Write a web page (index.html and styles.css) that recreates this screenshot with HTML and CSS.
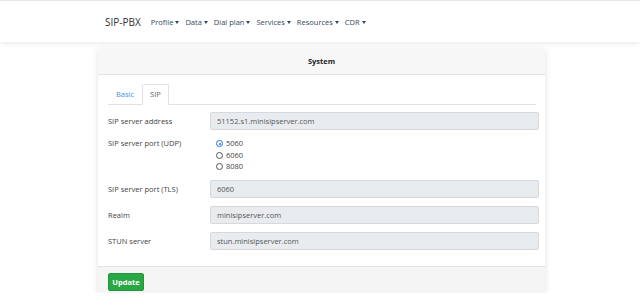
FILE: index.html
```html
<!DOCTYPE html>
<html lang="en">

<head>
    <meta charset="UTF-8">
    <meta name="viewport" content="width=device-width, initial-scale=1.0">
    <title>SIP-PBX - System</title>
    <link rel="stylesheet" href="styles.css">
</head>

<body>
    <nav class="navbar">
        <span class="brand">SIP-PBX</span>
        <ul class="menu">
            <li class="dropdown">Profile</li>
            <li class="dropdown">Data</li>
            <li class="dropdown">Dial plan</li>
            <li class="dropdown">Services</li>
            <li class="dropdown">Resources</li>
            <li class="dropdown">CDR</li>
        </ul>
    </nav>

    <div class="card">
        <div class="card-header">System</div>
        <div class="card-body">
            <ul class="tabs">
                <li class="tab">Basic</li>
                <li class="tab active">SIP</li>
            </ul>

            <div class="form-row">
                <label>SIP server address</label>
                <input type="text" value="51152.s1.minisipserver.com" readonly>
            </div>

            <div class="form-row radio-row">
                <label>SIP server port (UDP)</label>
                <div class="radios">
                    <label class="radio"><span class="dot checked"></span>5060</label>
                    <label class="radio"><span class="dot"></span>6060</label>
                    <label class="radio"><span class="dot"></span>8080</label>
                </div>
            </div>

            <div class="form-row">
                <label>SIP server port (TLS)</label>
                <input type="text" value="6060" readonly>
            </div>

            <div class="form-row">
                <label>Realm</label>
                <input type="text" value="minisipserver.com" readonly>
            </div>

            <div class="form-row">
                <label>STUN server</label>
                <input type="text" value="stun.minisipserver.com" readonly>
            </div>
        </div>
        <div class="card-footer">
            <button class="btn">Update</button>
        </div>
    </div>
</body>

</html>
```

FILE: styles.css
```css
body {
    font-family: "Open Sans", Arial, sans-serif;
    font-size: 7.5px;
    color: #333;
    margin: 0;
    background-color: #fff;
    border-top: 1px solid #e6e6e6;
}

.navbar {
    display: flex;
    align-items: center;
    height: 41px;
    padding-left: 105px;
    background: #fff;
    box-shadow: 0 2px 5px rgba(0, 0, 0, 0.08);
}

.brand {
    font-size: 10px;
    color: #333;
    margin-right: 10px;
}

.menu {
    display: flex;
    list-style: none;
    margin: 0;
    padding: 0;
    gap: 6px;
}

.dropdown {
    color: #34495e;
    font-size: 7.5px;
}

.dropdown::after {
    content: "";
    display: inline-block;
    margin-left: 2px;
    vertical-align: 1px;
    border-top: 3px solid #34495e;
    border-left: 2px solid transparent;
    border-right: 2px solid transparent;
}

.card {
    width: 447px;
    margin: 7px 0 0 98px;
    background: #fff;
    box-shadow: 0 1px 6px rgba(0, 0, 0, 0.12);
}

.card-header {
    background: #f7f7f7;
    border-bottom: 1px solid #e4e4e4;
    height: 25px;
    line-height: 25px;
    text-align: center;
    font-weight: bold;
    color: #222;
}

.card-body {
    padding: 9px 6px 8px 10px;
}

.tabs {
    display: flex;
    list-style: none;
    margin: 0 3px 7px 0;
    padding: 0;
    border-bottom: 1px solid #e2e2e2;
}

.tab {
    padding: 5px 7px;
    color: #4a90e2;
    border: 1px solid transparent;
    margin-bottom: -1px;
    line-height: 9px;
}

.tab.active {
    color: #666;
    border-color: #e2e2e2 #e2e2e2 #fff;
    background: #fff;
    border-radius: 2px 2px 0 0;
}

.form-row {
    display: grid;
    grid-template-columns: 102px 1fr;
    align-items: center;
    margin-bottom: 8px;
}

.form-row label {
    color: #444;
}

input {
    font-family: inherit;
    font-size: 7.5px;
    color: #555;
    background: #e9ecef;
    border: 1px solid #d6d9dc;
    border-radius: 2px;
    height: 18px;
    box-sizing: border-box;
    padding: 0 6px;
    width: 329px;
}

.radio-row {
    align-items: start;
    margin-bottom: 7px;
}

.radios {
    display: flex;
    flex-direction: column;
    padding-left: 6px;
    line-height: 11.5px;
}

.radio {
    display: flex;
    align-items: center;
    gap: 3px;
}

.dot {
    width: 7px;
    height: 7px;
    border: 1px solid #555;
    border-radius: 50%;
    box-sizing: border-box;
    position: relative;
}

.dot.checked {
    border-color: #1e73e8;
}

.dot.checked::after {
    content: "";
    position: absolute;
    left: 1.5px;
    top: 1.5px;
    width: 2px;
    height: 2px;
    border-radius: 50%;
    background: #1e73e8;
}

.card-footer {
    background: #f5f5f5;
    border-top: 1px solid #e4e4e4;
    padding: 6px 10px 2px;
    height: 18px;
}

.btn {
    font-family: inherit;
    font-size: 7.5px;
    font-weight: bold;
    color: #fff;
    background: #28a745;
    border: 1px solid #23963d;
    border-radius: 2px;
    height: 18px;
    width: 36px;
    padding: 0;
}
```
